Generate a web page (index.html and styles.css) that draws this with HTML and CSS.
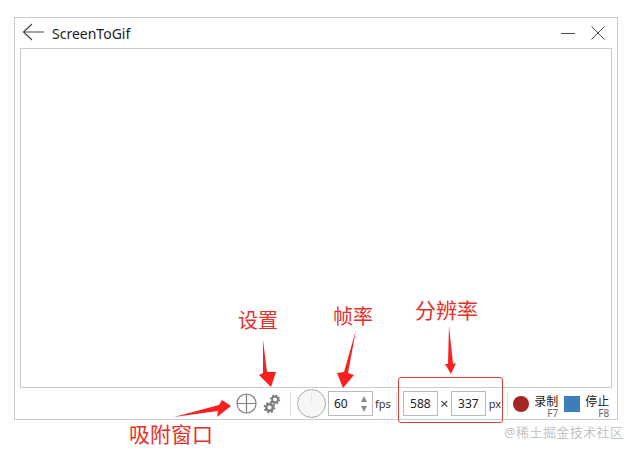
FILE: index.html
```html
<!DOCTYPE html>
<html lang="zh-CN">
<head>
    <meta charset="UTF-8">
    <meta name="viewport" content="width=device-width, initial-scale=1.0">
    <title>ScreenToGif</title>
    <link rel="stylesheet" href="styles.css">
</head>
<body>
    <!-- Recorder window -->
    <div class="window">
        <div class="title-bar">
            <svg class="back-icon" width="22" height="18" viewBox="0 0 22 18">
                <path d="M10 1 L1.5 9 L10 17 M1.5 9 H22" fill="none" stroke="#444" stroke-width="1.1"/>
            </svg>
            <span class="title">ScreenToGif</span>
            <svg class="min-icon" width="14" height="14" viewBox="0 0 14 14">
                <path d="M0 7.5 H14" stroke="#555" stroke-width="1"/>
            </svg>
            <svg class="close-icon" width="14" height="14" viewBox="0 0 14 14">
                <path d="M0.5 0.5 L13.5 13.5 M13.5 0.5 L0.5 13.5" stroke="#444" stroke-width="1"/>
            </svg>
        </div>

        <div class="capture-area"></div>

        <div class="tool-bar">
            <svg class="snap-icon" width="21" height="21" viewBox="0 0 21 21">
                <circle cx="10.5" cy="10.5" r="9.5" fill="none" stroke="#808080" stroke-width="1.2"/>
                <path d="M10.5 1 V20 M1 10.5 H20" stroke="#808080" stroke-width="1.2"/>
            </svg>
            <svg class="gear-icon" width="18" height="22" viewBox="0 0 18 22">
                <circle cx="12" cy="6.5" r="2.9" fill="none" stroke="#7c7c7c" stroke-width="2"/>
                <circle cx="12" cy="6.5" r="4.4" fill="none" stroke="#7c7c7c" stroke-width="1.4" stroke-dasharray="1.7 1.75"/>
                <circle cx="6.5" cy="14.5" r="3.3" fill="none" stroke="#7c7c7c" stroke-width="2.4"/>
                <circle cx="6.5" cy="14.5" r="5" fill="none" stroke="#7c7c7c" stroke-width="1.6" stroke-dasharray="2 1.93"/>
            </svg>
            <div class="separator sep-first"></div>
            <div class="dial"></div>
            <div class="num-box fps-box">
                <span>60</span>
                <div class="spinner">
                    <div class="spin-up"></div>
                    <div class="spin-down"></div>
                </div>
            </div>
            <span class="unit fps-unit">fps</span>
            <div class="separator sep-second"></div>
            <div class="num-box size-box">588</div>
            <span class="times">×</span>
            <div class="num-box size-box">337</div>
            <span class="unit px-unit">px</span>
            <div class="separator sep-third"></div>
            <div class="record-dot"></div>
            <div class="action record-action">
                <span>录制</span>
                <span class="shortcut">F7</span>
            </div>
            <div class="stop-square"></div>
            <div class="action stop-action">
                <span>停止</span>
                <span class="shortcut">F8</span>
            </div>
        </div>
    </div>

    <!-- Red annotations drawn on top of the screenshot -->
    <div class="note note-snap">吸附窗口</div>
    <div class="note note-settings">设置</div>
    <div class="note note-fps">帧率</div>
    <div class="note note-size">分辨率</div>
    <div class="size-frame"></div>
    <svg class="arrows" width="637" height="454" viewBox="0 0 637 454">
        <polygon points="174,417 219,405 222,400 231,406 217,417 218,411" fill="#fb1f1f"/>
        <polygon points="263,340 267,372 276,372 271,387 259,375 263,373" fill="#fb1f1f"/>
        <polygon points="356,330 348,373 354,375 343,388 337,373 344,372" fill="#fb1f1f"/>
        <polygon points="449,326 453,364 456,363 451,374 445,364 448,364" fill="#fb1f1f"/>
    </svg>
    <div class="watermark">@稀土掘金技术社区</div>
</body>
</html>
```

FILE: styles.css
```css
body {
    margin: 0;
    padding: 17px 0 0 14px;
    background-color: #fff;
    font-family: "Noto Sans", "Noto Sans CJK SC", sans-serif;
    color: #222;
}

/* Window frame */
.window {
    width: 592px;
    height: 401px;
    border: 1px solid #ccc;
    display: flex;
    flex-direction: column;
    padding: 0 5px;
    box-sizing: content-box;
}

.title-bar {
    height: 30px;
    display: flex;
    align-items: center;
    flex: none;
}

.back-icon {
    margin: 0 0 2px 2px;
}

.title {
    margin-left: 8px;
    font-size: 14px;
    flex: 1;
}

.min-icon {
    margin-right: 16px;
    margin-bottom: 1px;
}

.close-icon {
    margin-right: 7px;
}

.capture-area {
    flex: 1;
    border: 1px solid #ccc;
    background-color: #fff;
}

/* Bottom tool bar */
.tool-bar {
    height: 31px;
    flex: none;
    display: flex;
    align-items: center;
    font-size: 12px;
}

.snap-icon {
    margin-left: 216px;
}

.gear-icon {
    margin-left: 6px;
}

.separator {
    width: 1px;
    height: 24px;
    background-color: #e2e2e2;
}

.sep-first {
    margin: 0 6px 0 9px;
}

.sep-second {
    margin: 0 6px 0 5px;
}

.sep-third {
    margin: 0 5px 0 6px;
}

.dial {
    position: relative;
    width: 27px;
    height: 27px;
    border: 1px solid #aaa;
    border-radius: 50%;
    background-color: #f6f6f6;
}

/* faint tick on the dial */
.dial::after {
    content: "";
    position: absolute;
    left: 13px;
    top: 3px;
    width: 1px;
    height: 9px;
    background-color: #e6e6e6;
}

.num-box {
    height: 25px;
    box-sizing: border-box;
    border: 1px solid #bbb;
    display: flex;
    align-items: center;
}

.fps-box {
    width: 45px;
    margin-left: 2px;
    padding: 0 5px;
    justify-content: space-between;
}

.size-box {
    width: 35px;
    justify-content: center;
}

.spinner {
    display: flex;
    flex-direction: column;
    gap: 4px;
}

.spin-up,
.spin-down {
    width: 0;
    height: 0;
    border-left: 3.5px solid transparent;
    border-right: 3.5px solid transparent;
}

.spin-up {
    border-bottom: 6px solid #8a8a8a;
}

.spin-down {
    border-top: 6px solid #8a8a8a;
}

.unit {
    font-size: 11px;
    color: #333;
}

.fps-unit {
    margin-left: 2px;
}

.px-unit {
    margin-left: 3px;
}

.times {
    width: 13px;
    text-align: center;
    font-size: 15px;
    line-height: 15px;
    color: #444;
}

.record-dot {
    width: 16px;
    height: 16px;
    border-radius: 50%;
    background-color: #a32622;
}

.stop-square {
    width: 16px;
    height: 16px;
    margin-left: 6px;
    background-color: #3c7fb8;
}

.action {
    position: relative;
    width: 24px;
    margin-left: 5px;
    font-size: 12px;
    line-height: 12px;
    margin-bottom: 4px;
}

/* the F-key hint sits right under the label's lower right corner */
.shortcut {
    position: absolute;
    right: 0;
    top: 12px;
    font-size: 10px;
    line-height: 10px;
    color: #666;
}

/* Annotations */
.note {
    position: absolute;
    color: #e5302a;
    font-size: 20px;
    line-height: 24px;
    white-space: nowrap;
}

.note-snap {
    left: 129px;
    top: 422px;
    font-size: 21px;
}

.note-settings {
    left: 238px;
    top: 309px;
}

.note-fps {
    left: 333px;
    top: 305px;
}

.note-size {
    left: 415px;
    top: 298px;
    font-size: 21px;
}

.size-frame {
    position: absolute;
    left: 398px;
    top: 377px;
    width: 105px;
    height: 46px;
    box-sizing: border-box;
    border: 1px solid #d9423a;
    border-radius: 3px;
}

.arrows {
    position: absolute;
    left: 0;
    top: 0;
}

.watermark {
    position: absolute;
    left: 504px;
    top: 423px;
    font-size: 13px;
    line-height: 18px;
    letter-spacing: 0.4px;
    color: #c4c4c4;
    white-space: nowrap;
}
```
